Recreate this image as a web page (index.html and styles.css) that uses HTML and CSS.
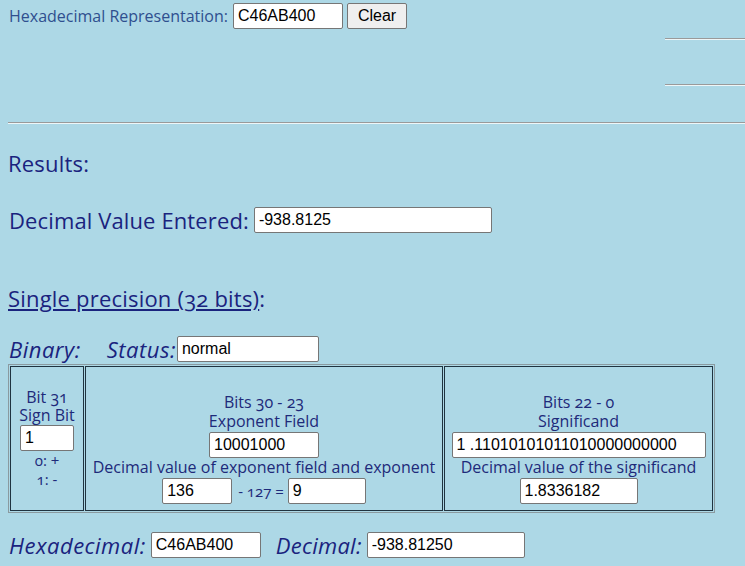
FILE: index.html
```html
<!DOCTYPE html>
<html>
<head>
<meta charset="utf-8">
<link rel="stylesheet" href="styles.css">
</head>
<body>
<div class="top">
  <div class="hexrow">
    <label class="toplabel">Hexadecimal Representation:</label>
    <input class="inp w110" value="C46AB400">
    <button class="btn">Clear</button>
  </div>
  <div class="side">
    <hr class="sidehr first">
    <hr class="sidehr second">
  </div>
</div>
<hr class="rule">
<h2 class="results">Results:</h2>
<div class="row big dec">
  <span class="lbl">Decimal Value Entered:</span>
  <input class="inp w238" value="-938.8125">
</div>
<h2 class="single"><a href="#" class="link">Single precision (32 bits)</a>:</h2>
<div class="row big it status">
  <span class="lbl">Binary:</span>
  <span class="lbl status-lbl">Status:</span>
  <input class="inp w142" value="normal">
</div>
<table class="bits">
  <tr>
    <td class="c1">
      <div class="line18">Bit 31</div>
      <div class="line18">Sign Bit</div>
      <input class="inp w54 cellinp" value="1">
      <div class="small">0: +</div>
      <div class="small">1: -</div>
    </td>
    <td class="c2">
      <div class="line19">Bits 30 - 23</div>
      <div class="line19">Exponent Field</div>
      <input class="inp w110 cellinp" value="10001000">
      <div class="line19 nowrap">Decimal value of exponent field and exponent</div>
      <div class="exprow">
        <input class="inp w70" value="136">
        <span class="minus">- 127 =</span>
        <input class="inp w78" value="9">
      </div>
    </td>
    <td class="c3">
      <div class="line19">Bits 22 - 0</div>
      <div class="line19">Significand</div>
      <input class="inp w254 cellinp" value="1 .11010101011010000000000">
      <div class="line19 nowrap">Decimal value of the significand</div>
      <div class="exprow">
        <input class="inp w118" value="1.8336182">
      </div>
    </td>
  </tr>
</table>
<div class="row big it bottom">
  <span class="lbl">Hexadecimal:</span>
  <input class="inp w110" value="C46AB400">
  <span class="lbl dec-lbl">Decimal:</span>
  <input class="inp w158" value="-938.81250">
</div>
</body>
</html>
```
FILE: styles.css
```css
html, body {
  background: #add8e6;
}
body {
  margin: 0 0 0 8px;
  padding-top: 3px;
  font-family: "Open Sans", sans-serif;
  font-variant-numeric: oldstyle-nums;
  color: #1a237e;
  overflow: hidden;
}
.top {
  display: flex;
  align-items: flex-start;
}
.hexrow {
  display: flex;
  align-items: center;
  height: 26px;
}
.toplabel {
  font-size: 16px;
  color: #2f4f8f;
  margin-left: 1px;
  margin-right: 5px;
}
.inp {
  box-sizing: border-box;
  height: 26px;
  border: 1px solid #767676;
  border-radius: 2px;
  background: #fff;
  font-family: "Liberation Sans", Arial, sans-serif;
  font-size: 16px;
  font-variant-numeric: normal;
  letter-spacing: 0;
  font-style: normal;
  color: #000;
  padding: 0 3px 0 4px;
  margin: 0;
}
.w54 { width: 54px; }
.w70 { width: 70px; }
.w78 { width: 78px; }
.w110 { width: 110px; }
.w118 { width: 118px; }
.w142 { width: 142px; }
.w158 { width: 158px; }
.w238 { width: 238px; }
.w254 { width: 254px; }
.btn {
  box-sizing: border-box;
  height: 26px;
  width: 60px;
  margin-left: 4px;
  border: 1px solid #767676;
  border-radius: 2px;
  background: #efefef;
  font-family: "Liberation Sans", Arial, sans-serif;
  font-size: 16px;
  color: #000;
  padding: 0;
}
.side {
  margin-left: auto;
  width: 80px;
}
.sidehr {
  display: block;
  height: 0;
  margin: 0;
  border: 0;
  border-top: 1px solid #9a9a9a;
  border-bottom: 1px solid #eef6f8;
}
.sidehr.first { margin-top: 35px; }
.sidehr.second { margin-top: 44px; }
.rule {
  display: block;
  height: 0;
  margin: 36px 0 0 0;
  border: 0;
  border-top: 1px solid #9a9a9a;
  border-bottom: 1px solid #eef6f8;
}
h2 {
  margin: 0;
  font-weight: normal;
  font-size: 22px;
  line-height: 30px;
  letter-spacing: 0.2px;
  color: #1a237e;
}
.results { margin-top: 24px; }
.row {
  display: flex;
  align-items: center;
  height: 27px;
}
.big {
  font-size: 22px;
  color: #1a237e;
  letter-spacing: 0.12px;
}
.it .lbl { font-style: italic; letter-spacing: 0.5px; }
.lbl { margin-left: 1px; margin-right: 5px; }
.dec { margin-top: 28px; }
.single { margin-top: 50px; }
.link { color: #1a237e; }
.status { margin-top: 23px; height: 26px; }
.status-lbl { margin-left: 21px; margin-right: 1px; }
.bits {
  margin-top: 2px;
  border: 1px solid #8a9aa0;
  border-spacing: 1px;
  width: 707px;
  color: #1e2a7a;
  font-size: 16px;
}
.bits td {
  border: 1px solid #1f3340;
  text-align: center;
  vertical-align: middle;
  padding: 0;
  height: 145px;
  box-sizing: border-box;
}
.c1 { width: 74px; }
.c2 { width: 358px; padding-top: 20px !important; }
.c3 { padding-top: 20px !important; }
.line18 { line-height: 18px; }
.line19 { line-height: 19px; }
.cellinp { display: block; margin: 1px auto 0; }
.nowrap { white-space: nowrap; }
.small {
  font-size: 15px;
  line-height: 19px;
}
.exprow {
  display: flex;
  justify-content: center;
  align-items: center;
  height: 27px;
}
.minus {
  font-size: 15px;
  margin: 0 4px 0 6px;
}
.bottom { margin-top: 19px; height: 26px; }
.dec-lbl { margin-left: 15px; letter-spacing: 0.25px !important; }
```
